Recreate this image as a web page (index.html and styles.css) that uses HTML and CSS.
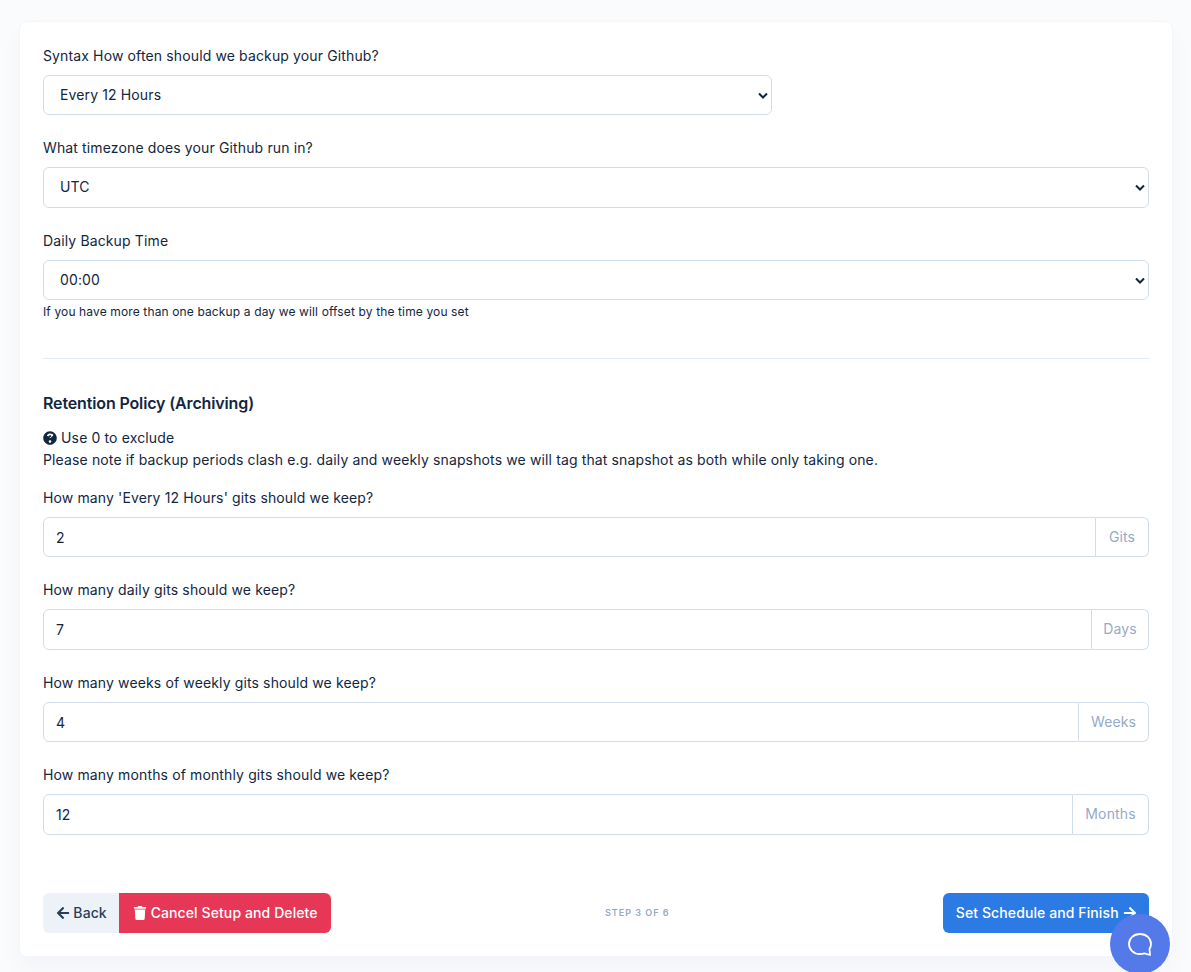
FILE: index.html
```
<!DOCTYPE html>
<html lang="en">
<head>
<meta charset="utf-8">
<title>Schedule</title>
<link rel="stylesheet" href="styles.css">
</head>
<body>
<main class="card">
  <form class="form">
    <div class="group narrow">
      <label class="label">Syntax How often should we backup your Github?</label>
      <select class="control select"><option>Every 12 Hours</option></select>
    </div>
    <div class="group">
      <label class="label">What timezone does your Github run in?</label>
      <select class="control select"><option>UTC</option></select>
    </div>
    <div class="group last">
      <label class="label">Daily Backup Time</label>
      <select class="control select"><option>00:00</option></select>
      <small class="help">If you have more than one backup a day we will offset by the time you set</small>
    </div>
    <hr class="rule">
    <h2 class="heading">Retention Policy (Archiving)</h2>
    <p class="note"><svg class="qicon" viewBox="0 0 512 512"><path fill="currentColor" d="M504 256c0 137-111 248-248 248S8 393 8 256 119 8 256 8s248 111 248 248zM262.700 90c-54.500 0-89.300 23-116.500 63.800-3.500 5.300-2.400 12.400 2.700 16.300l34.700 26.300c5.200 3.900 12.600 3 16.700-2.100 17.900-22.700 30.100-35.800 57.300-35.800 20.400 0 45.700 13.100 45.700 33 0 15-12.400 22.700-32.600 34-23.600 13.200-54.800 29.700-54.800 70.900V240c0 6.600 5.400 12 12 12h56c6.600 0 12-5.400 12-12v-1.300c0-28.600 83.500-29.800 83.500-107.200C377.400 133.100 321.300 90 262.700 90zM256 338c-25.500 0-46.200 20.700-46.200 46.200 0 25.500 20.700 46.200 46.200 46.200s46.200-20.700 46.200-46.200c0-25.500-20.700-46.200-46.200-46.200z"/></svg> Use 0 to exclude<br>Please note if backup periods clash e.g. daily and weekly snapshots we will tag that snapshot as both while only taking one.</p>
    <div class="group">
      <label class="label">How many 'Every 12 Hours' gits should we keep?</label>
      <div class="input-group"><input class="control joined" value="2"><span class="addon addon-gits">Gits</span></div>
    </div>
    <div class="group">
      <label class="label">How many daily gits should we keep?</label>
      <div class="input-group"><input class="control joined" value="7"><span class="addon addon-days">Days</span></div>
    </div>
    <div class="group">
      <label class="label">How many weeks of weekly gits should we keep?</label>
      <div class="input-group"><input class="control joined" value="4"><span class="addon addon-weeks">Weeks</span></div>
    </div>
    <div class="group">
      <label class="label">How many months of monthly gits should we keep?</label>
      <div class="input-group"><input class="control joined" value="12"><span class="addon addon-months">Months</span></div>
    </div>
    <div class="actions">
      <div class="left">
        <button type="button" class="btn back"><svg class="bicon" viewBox="0 0 448 512"><path fill="currentColor" d="M257.500 445.100l-22.200 22.200c-9.400 9.400-24.600 9.400-33.900 0L7 273c-9.400-9.400-9.400-24.600 0-33.900L201.400 44.700c9.400-9.400 24.600-9.400 33.900 0l22.200 22.200c9.500 9.500 9.300 25-.4 34.300L136.600 216H424c13.300 0 24 10.700 24 24v32c0 13.300-10.700 24-24 24H136.600l120.500 114.800c9.800 9.300 10 24.800.4 34.300z"/></svg> Back</button>
        <button type="button" class="btn danger"><svg class="bicon" viewBox="0 0 448 512"><path fill="currentColor" d="M432 32H312l-9.400-18.700A24 24 0 0 0 281.100 0H166.800a23.700 23.700 0 0 0-21.400 13.300L136 32H16A16 16 0 0 0 0 48v32a16 16 0 0 0 16 16h416a16 16 0 0 0 16-16V48a16 16 0 0 0-16-16zM53.200 467a48 48 0 0 0 47.900 45h245.800a48 48 0 0 0 47.900-45L416 128H32z"/></svg> Cancel Setup and Delete</button>
      </div>
      <div class="step">STEP 3 OF 6</div>
      <div class="right">
        <button type="button" class="btn primary">Set Schedule and Finish <svg class="bicon" viewBox="0 0 448 512"><path fill="currentColor" d="M190.500 66.900l22.200-22.200c9.400-9.400 24.600-9.400 33.900 0L441 239c9.400 9.400 9.400 24.600 0 33.900L246.600 467.300c-9.400 9.400-24.600 9.400-33.900 0l-22.200-22.200c-9.500-9.500-9.300-25 .4-34.300L311.400 296H24c-13.300 0-24-10.700-24-24v-32c0-13.300 10.700-24 24-24h287.400L190.900 101.200c-9.800-9.300-10-24.800-.4-34.300z"/></svg></button>
      </div>
    </div>
  </form>
</main>
<div class="chat"><svg class="chat-icon" viewBox="0 0 28 28"><path fill="none" stroke="currentColor" stroke-width="1.800" stroke-linejoin="round" d="M14 4C7.600 4 3 8.500 3 14s4.600 10 11 10c1.600 0 3-.2 4.400-.7L24 25l-.5-6c1-1.500 1.500-3.200 1.500-5 0-5.500-4.600-10-11-10z"/></svg></div>
</body>
</html>
```
FILE: styles.css
```
* { box-sizing: border-box; }
html, body { margin: 0; height: 972px; overflow: hidden; }
body {
  background: #f9fbfd;
  padding: 21px 18px 15px 19px;
  color: #12263f;
  font-family: "Inter", "Liberation Sans", sans-serif;
  font-size: 14px;
  line-height: 22.5px;
  letter-spacing: 0.13px;
}
.card {
  height: 936px;
  background: #fff;
  border: 1px solid #f3f6fb;
  border-radius: 8px;
  box-shadow: 0 12px 24px rgba(18, 38, 63, 0.03);
  padding: 23px 23px 0;
}
.group { margin-bottom: 22.1px; }
.group.narrow { width: 729px; }
.group.last { margin-bottom: 0; }
.label { display: block; margin-bottom: 7.4px; }
.control {
  display: block;
  width: 100%;
  height: 40.5px;
  font: inherit;
  letter-spacing: inherit;
  color: #12263f;
  background: #fff;
  border: 1px solid #d2ddec;
  border-radius: 6px;
  padding: 0 12px;
  outline: none;
}
.select {
  appearance: none;
  padding: 0 16px;
  background-image: url("data:image/svg+xml,%3Csvg xmlns='http://www.w3.org/2000/svg' viewBox='0 0 10 7'%3E%3Cpath d='M1 1.500l4 4 4-4' fill='none' stroke='%2312263f' stroke-width='2'/%3E%3C/svg%3E");
  background-repeat: no-repeat;
  background-size: 10px 7px;
  background-position: right 3px center;
}
.help { display: block; font-size: 12px; line-height: 18px; margin-top: 2.6px; }
.rule { border: 0; border-top: 1px solid #e3ebf6; margin: 37px 0 32px; }
.heading { font-size: 16px; font-weight: 600; line-height: 24px; letter-spacing: -0.14px; margin: 0 0 12px; }
.note { margin: 0 0 15px; }
.qicon { width: 14px; height: 14px; vertical-align: -2px; }
.input-group { display: flex; }
.joined { flex: 1; width: auto; min-width: 0; border-radius: 6px 0 0 6px; }
.addon {
  display: flex;
  align-items: center;
  justify-content: center;
  color: #95aac9;
  border: 1px solid #d2ddec;
  border-left: 0;
  border-radius: 0 6px 6px 0;
}
.addon-gits { width: 53px; }
.addon-days { width: 57px; }
.addon-weeks { width: 70px; }
.addon-months { width: 76px; }
.actions { display: flex; align-items: center; margin-top: 58px; }
.left, .right { display: flex; }
.btn {
  height: 40px;
  padding: 0 13px;
  border: 0;
  border-radius: 6px;
  font: inherit;
  letter-spacing: 0.1px;
  font-weight: 500;
  white-space: nowrap;
}
.bicon { width: 14px; height: 14px; vertical-align: -2px; }
.back { padding: 0 12.5px; background: #edf2f9; color: #283e59; border-radius: 6px 0 0 6px; }
.danger { padding: 0 13.5px; background: #e63757; color: #fff; border-radius: 0 6px 6px 0; }
.primary { padding: 0 12.5px; background: #2c7be5; color: #fff; }
.step { flex: 1; text-align: center; font-size: 9px; font-weight: 600; letter-spacing: 1px; color: #95aac9; }
.chat {
  position: fixed;
  right: 21px;
  bottom: -2px;
  width: 60px;
  height: 60px;
  border-radius: 50%;
  background: #5479e8;
  color: #fff;
  display: flex;
  align-items: center;
  justify-content: center;
}
.chat-icon { width: 28px; height: 28px; }
```
